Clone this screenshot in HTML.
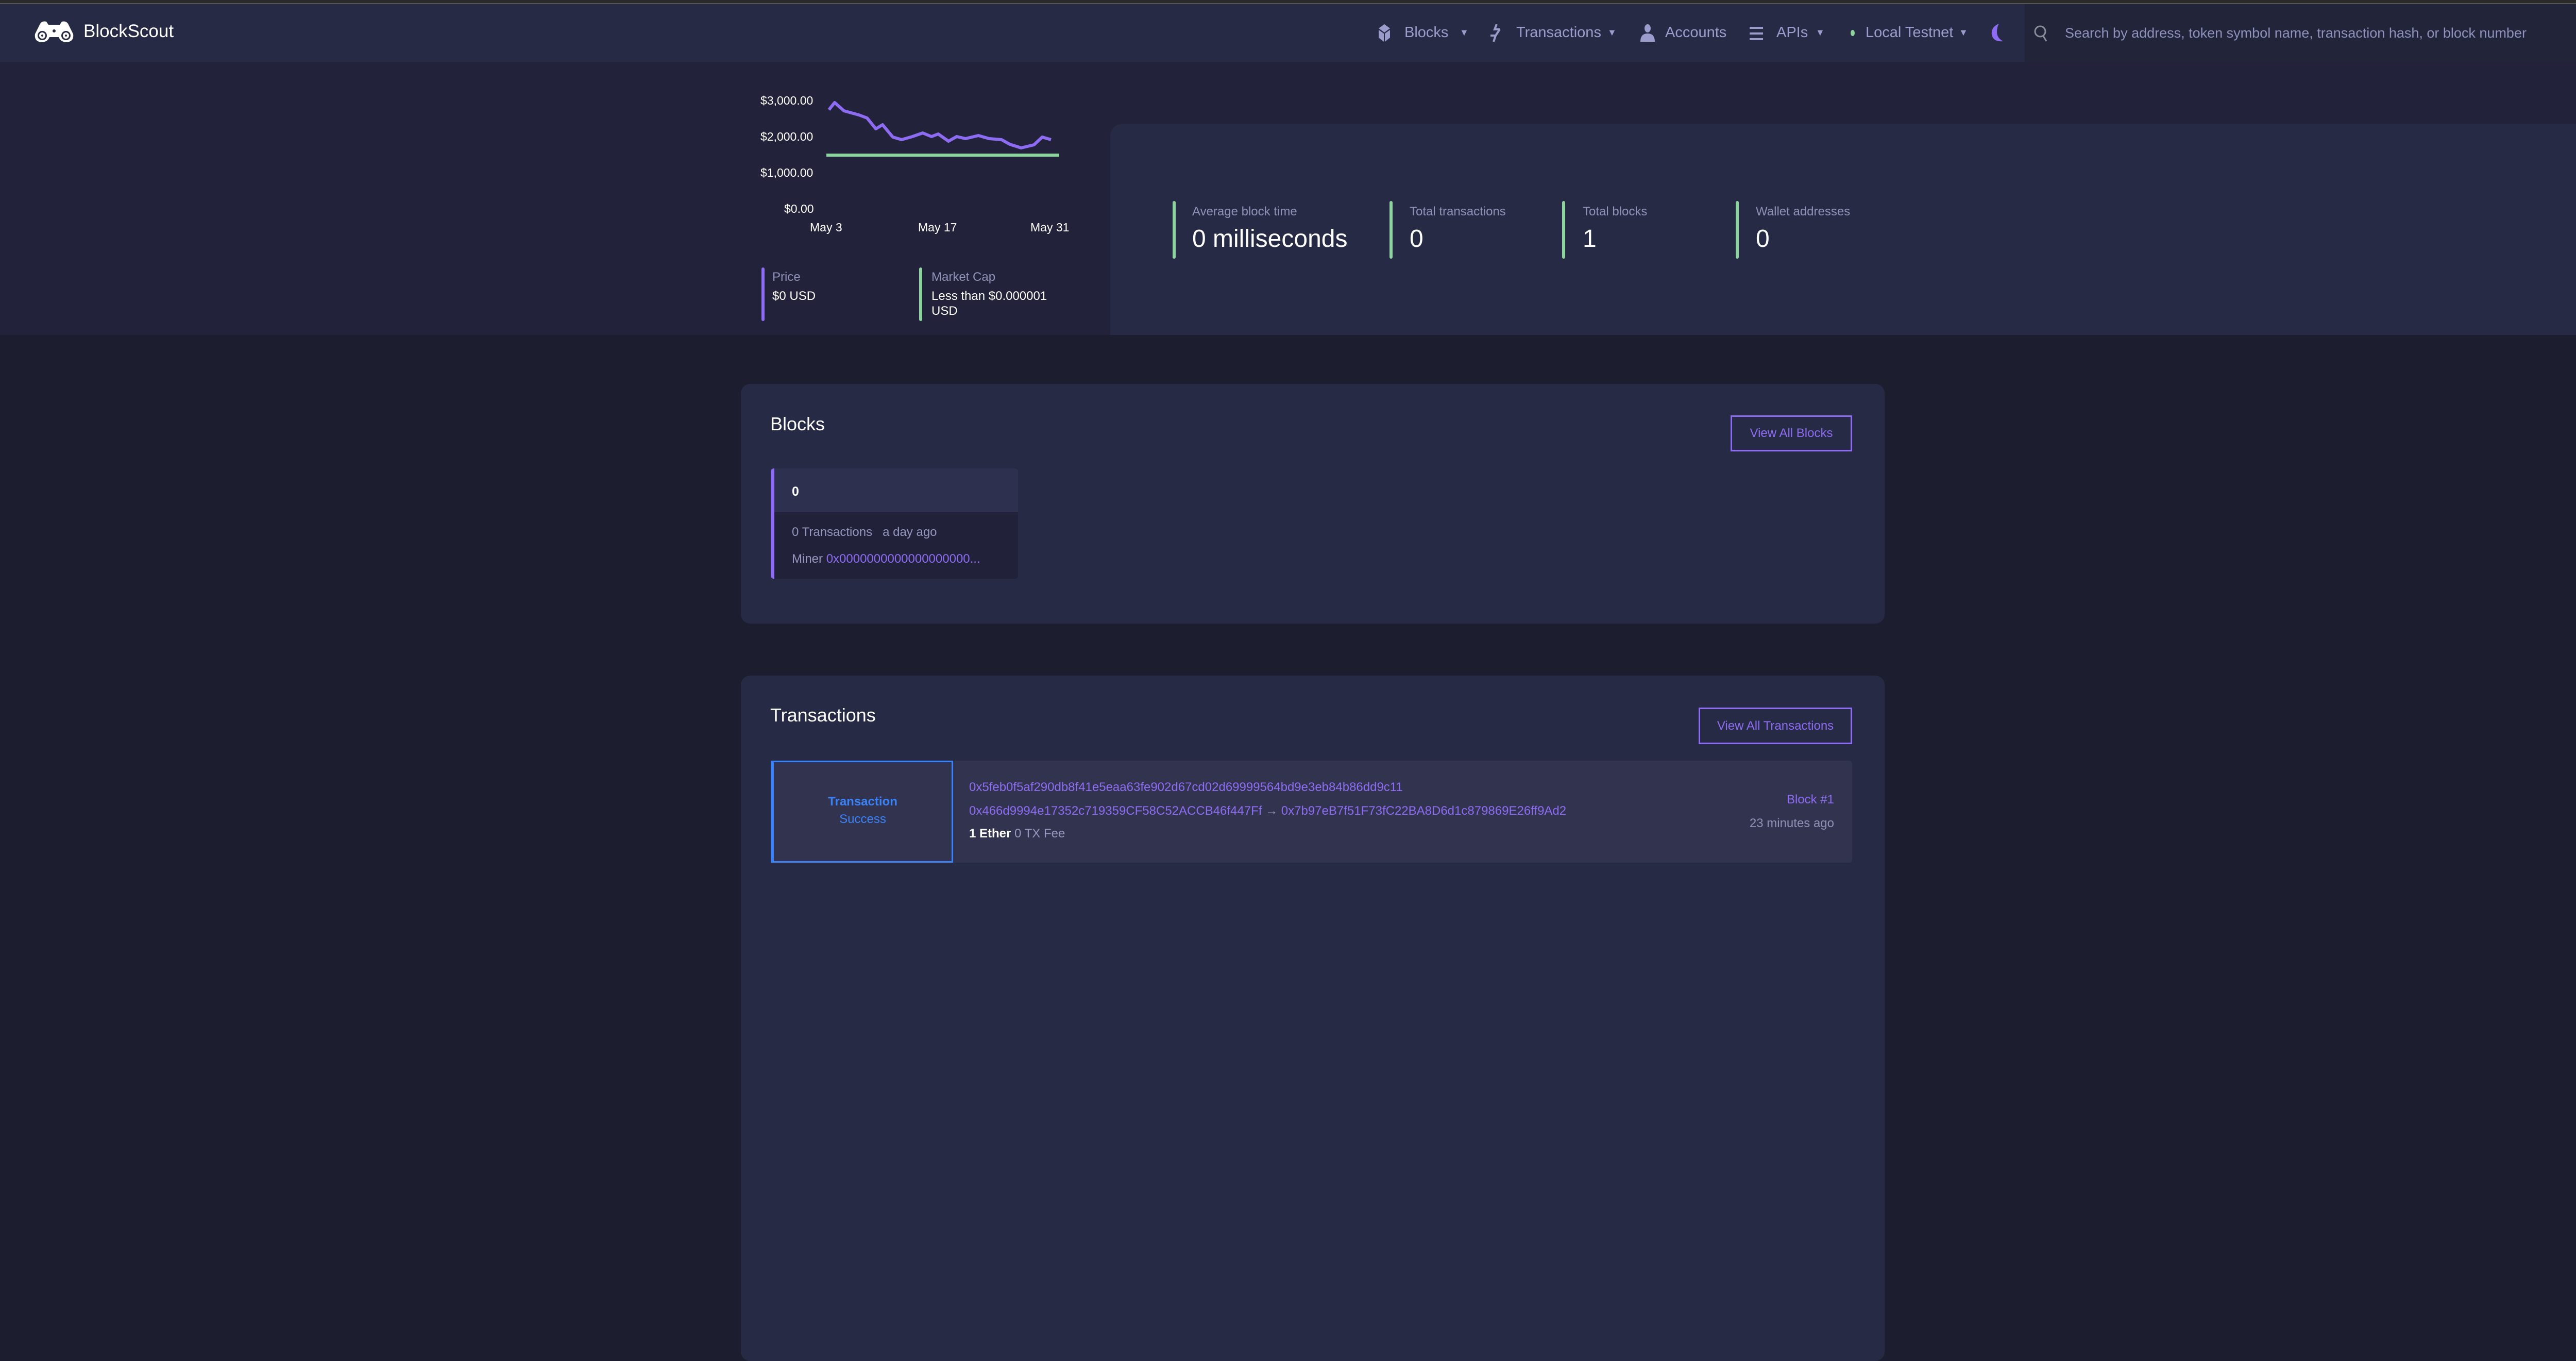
<!DOCTYPE html>
<html><head><meta charset="utf-8"><style>
*{margin:0;padding:0;box-sizing:border-box}
body{width:5088px;height:2638px;background:#1c1d2e;font-family:"Liberation Sans",sans-serif;position:relative;overflow:hidden;color:#fff}
.a{position:absolute;white-space:nowrap}
.nav{color:#9a9dcc;font-size:29px;top:47px}
.lbl{color:#8f91b8;font-size:24px}
.val{color:#fff;font-size:48px}
.bar{position:absolute;width:6px;border-radius:3px}
.p{color:#8d6cf3}
</style></head><body>
<div class="a" style="left:0;top:0;width:5088px;height:7px;background:#2a2a2a"></div>
<div class="a" style="left:0;top:6px;width:5088px;height:2px;background:#555"></div>
<div class="a" style="left:0;top:8px;width:3930px;height:112px;background:#272a45"></div>
<div class="a" style="left:3930px;top:8px;width:1158px;height:112px;background:#22243a"></div>
<div class="a" style="left:0;top:120px;width:5088px;height:530px;background:#22233a"></div>
<!-- logo -->
<svg class="a" style="left:64px;top:36px" width="82" height="48" viewBox="0 0 82 48">
<path d="M14 10 Q18 4 26 6 L30 12 L52 12 L56 6 Q64 4 68 10 L78 30 Q80 44 66 46 Q54 46 50 36 L32 36 Q28 46 16 46 Q2 44 4 30 Z" fill="#fff"/>
<circle cx="18" cy="33" r="9" fill="#272a45"/><circle cx="18" cy="33" r="6" fill="#fff"/><circle cx="18" cy="33" r="2" fill="#272a45"/>
<circle cx="64" cy="33" r="9" fill="#272a45"/><circle cx="64" cy="33" r="6" fill="#fff"/><circle cx="64" cy="33" r="2" fill="#272a45"/>
<circle cx="41" cy="24" r="3" fill="#272a45"/></svg>
<div class="a" style="left:162px;top:41px;font-size:35px;color:#fff">BlockScout</div>
<!-- nav -->
<svg class="a" style="left:2676px;top:47px" width="22" height="34" viewBox="0 0 22 34"><path d="M11 0 L22 8 L11 16 L0 8Z M0 11 L10 18 L10 34 L0 26Z M22 11 L12 18 L12 34 L22 26Z" fill="#9a9dcc"/></svg>
<div class="a nav" style="left:2726px">Blocks</div><div class="a nav" style="left:2833px;font-size:18px;top:53px">▼</div>
<svg class="a" style="left:2891px;top:47px" width="22" height="34" viewBox="0 0 22 34"><path d="M14 0 L10 10 L20 10 M20 10 L12 22 M2 22 L12 22 L8 34" stroke="#9a9dcc" stroke-width="4" fill="none"/></svg>
<div class="a nav" style="left:2943px">Transactions</div><div class="a nav" style="left:3120px;font-size:18px;top:53px">▼</div>
<svg class="a" style="left:3184px;top:47px" width="28" height="34" viewBox="0 0 28 34"><ellipse cx="14" cy="8" rx="6" ry="8" fill="#9a9dcc"/><path d="M0 34 Q0 18 14 18 Q28 18 28 34Z" fill="#9a9dcc"/></svg>
<div class="a nav" style="left:3232px">Accounts</div>
<svg class="a" style="left:3396px;top:50px" width="26" height="30" viewBox="0 0 26 30"><path d="M0 4H26M0 15H26M0 26H26" stroke="#9a9dcc" stroke-width="4"/></svg>
<div class="a nav" style="left:3448px">APIs</div><div class="a nav" style="left:3524px;font-size:18px;top:53px">▼</div>
<div class="a" style="left:3592px;top:58px;width:8px;height:12px;border-radius:50%;background:#8dd39e"></div>
<div class="a nav" style="left:3621px">Local Testnet</div><div class="a nav" style="left:3802px;font-size:18px;top:53px">▼</div>
<svg class="a" style="left:3864px;top:46px" width="26" height="38" viewBox="0 0 26 38"><path d="M16 0 Q0 6 2 22 Q6 36 24 34 Q12 28 12 16 Q12 6 16 0Z" fill="#8d6cf3"/></svg>
<svg class="a" style="left:3948px;top:48px" width="28" height="34" viewBox="0 0 28 34"><circle cx="12" cy="13" r="10" stroke="#8a8d99" stroke-width="3" fill="none"/><path d="M18 22 L24 32" stroke="#8a8d99" stroke-width="3"/></svg>
<div class="a nav" style="left:4008px;font-size:27px;top:49px;color:#8f92bd">Search by address, token symbol name, transaction hash, or block number</div>
<!-- chart -->
<div class="a" style="left:1476px;top:182px;font-size:23px">$3,000.00</div>
<div class="a" style="left:1476px;top:252px;font-size:23px">$2,000.00</div>
<div class="a" style="left:1476px;top:322px;font-size:23px">$1,000.00</div>
<div class="a" style="left:1522px;top:392px;font-size:23px">$0.00</div>
<div class="a" style="left:1572px;top:428px;font-size:23px">May 3</div>
<div class="a" style="left:1782px;top:428px;font-size:23px">May 17</div>
<div class="a" style="left:2000px;top:428px;font-size:23px">May 31</div>
<svg class="a" style="left:0;top:0" width="2100" height="320" viewBox="0 0 2100 320">
<polyline points="1609,213 1620,199 1638,215 1667,223 1683,229 1700,250 1713,242 1733,266 1750,271 1771,265 1791,258 1808,265 1821,260 1841,274 1857,265 1874,269 1899,263 1920,269 1944,271 1960,280 1982,287 2007,281 2023,266 2040,271" fill="none" stroke="#8d6cf3" stroke-width="6" stroke-linejoin="round"/>
<rect x="1604" y="298" width="452" height="6" fill="#8dd39e"/></svg>
<div class="bar" style="left:1478px;top:519px;height:104px;background:#8d6cf3"></div>
<div class="a lbl" style="left:1499px;top:524px">Price</div>
<div class="a" style="left:1499px;top:561px;font-size:24px">$0 USD</div>
<div class="bar" style="left:1784px;top:519px;height:104px;background:#8dd39e"></div>
<div class="a lbl" style="left:1808px;top:524px">Market Cap</div>
<div class="a" style="left:1808px;top:561px;font-size:24px">Less than $0.000001</div>
<div class="a" style="left:1808px;top:590px;font-size:24px">USD</div>
<!-- stats card -->
<div class="a" style="left:2155px;top:240px;width:2933px;height:410px;background:#272a45;border-top-left-radius:24px"></div>
<div class="bar" style="left:2276px;top:390px;height:112px;background:#8dd39e"></div>
<div class="a lbl" style="left:2314px;top:397px">Average block time</div>
<div class="a val" style="left:2314px;top:436px">0 milliseconds</div>
<div class="bar" style="left:2697px;top:390px;height:112px;background:#8dd39e"></div>
<div class="a lbl" style="left:2736px;top:397px">Total transactions</div>
<div class="a val" style="left:2736px;top:436px">0</div>
<div class="bar" style="left:3032px;top:390px;height:112px;background:#8dd39e"></div>
<div class="a lbl" style="left:3072px;top:397px">Total blocks</div>
<div class="a val" style="left:3072px;top:436px">1</div>
<div class="bar" style="left:3369px;top:390px;height:112px;background:#8dd39e"></div>
<div class="a lbl" style="left:3408px;top:397px">Wallet addresses</div>
<div class="a val" style="left:3408px;top:436px">0</div>
<!-- blocks card -->
<div class="a" style="left:1438px;top:745px;width:2220px;height:465px;background:#272a45;border-radius:18px"></div>
<div class="a" style="left:1495px;top:802px;font-size:36px">Blocks</div>
<div class="a p" style="left:3359px;top:806px;width:236px;height:70px;border:3px solid #8d6cf3;font-size:24px;line-height:64px;text-align:center">View All Blocks</div>
<div class="a" style="left:1496px;top:909px;width:480px;height:214px;background:#21223a;border-left:7px solid #8d6cf3;border-radius:6px;overflow:hidden"><div style="height:85px;background:#2e3050"></div></div>
<div class="a" style="left:1537px;top:940px;font-size:25px;font-weight:bold">0</div>
<div class="a lbl" style="left:1537px;top:1019px;color:#9496be">0 Transactions &nbsp; a day ago</div>
<div class="a lbl" style="left:1537px;top:1071px;color:#9496be">Miner <span class="p">0x0000000000000000000...</span></div>
<!-- tx card -->
<div class="a" style="left:1438px;top:1311px;width:2220px;height:1330px;background:#272a45;border-radius:18px"></div>
<div class="a" style="left:1495px;top:1367px;font-size:36px">Transactions</div>
<div class="a p" style="left:3297px;top:1373px;width:298px;height:71px;border:3px solid #8d6cf3;font-size:24px;line-height:65px;text-align:center">View All Transactions</div>
<div class="a" style="left:1496px;top:1476px;width:2099px;height:198px;background:#32344f;border-radius:6px"></div>
<div class="a" style="left:1496px;top:1476px;width:354px;height:198px;border:3px solid #3b82f6;border-left-width:6px;background:#32344f;color:#3b82f6;font-size:24px;text-align:center;line-height:34px;padding-top:60px;white-space:normal"><b>Transaction</b><br>Success</div>
<div class="a p" style="left:1881px;top:1514px;font-size:24px">0x5feb0f5af290db8f41e5eaa63fe902d67cd02d69999564bd9e3eb84b86dd9c11</div>
<div class="a p" style="left:1881px;top:1560px;font-size:24px">0x466d9994e17352c719359CF58C52ACCB46f447Ff <span style="color:#9496be">→</span> 0x7b97eB7f51F73fC22BA8D6d1c879869E26ff9Ad2</div>
<div class="a" style="left:1881px;top:1604px;font-size:24px"><b>1 Ether</b> <span style="color:#9496be">0 TX Fee</span></div>
<div class="a p" style="left:3463px;top:1538px;font-size:24px;width:97px;text-align:right">Block #1</div>
<div class="a lbl" style="left:3360px;top:1584px;width:200px;text-align:right">23 minutes ago</div>
</body></html>
